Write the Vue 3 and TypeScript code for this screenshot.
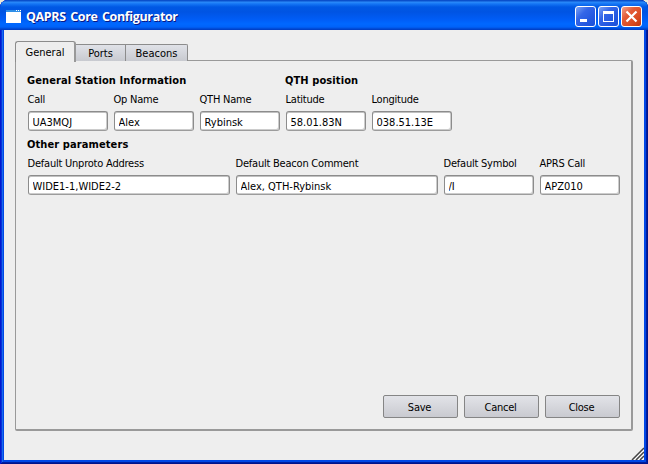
<script setup lang="ts">
import { ref } from 'vue'

interface Field { label: string; value: string; width: number }

const tabs = ['General', 'Ports', 'Beacons']
const active = ref('General')
const station = ref<Field[]>([
  { label: 'Call', value: 'UA3MQJ', width: 80 },
  { label: 'Op Name', value: 'Alex', width: 80 },
  { label: 'QTH Name', value: 'Rybinsk', width: 80 },
])
const position = ref<Field[]>([
  { label: 'Latitude', value: '58.01.83N', width: 80 },
  { label: 'Longitude', value: '038.51.13E', width: 80 },
])
const other = ref<Field[]>([
  { label: 'Default Unproto Address', value: 'WIDE1-1,WIDE2-2', width: 202 },
  { label: 'Default Beacon Comment', value: 'Alex, QTH-Rybinsk', width: 202 },
  { label: 'Default Symbol', value: '/I', width: 90 },
  { label: 'APRS Call', value: 'APZ010', width: 80 },
])
const groups = [
  [
    { title: 'General Station Information', fields: station },
    { title: 'QTH position', fields: position },
  ],
  [{ title: 'Other parameters', fields: other }],
]
const actions = ['Save', 'Cancel', 'Close']
</script>

<template>
  <div class="window">
    <header class="titlebar">
      <svg class="app-icon" width="16" height="14" viewBox="0 0 16 14">
        <rect width="15" height="13" fill="#fff" />
        <rect width="15" height="2" fill="#2f8fe8" />
        <path d="M10 .5h1M12 .5h1M14 .5h1" stroke="#fff" />
      </svg>
      <h1 class="title">QAPRS Core Configurator</h1>
      <div class="controls">
        <button class="control" aria-label="Minimize">
          <svg width="19" height="19" viewBox="0 0 19 19"><path d="M4 12h7v3H4z" fill="#fff" /></svg>
        </button>
        <button class="control" aria-label="Maximize">
          <svg width="19" height="19" viewBox="0 0 19 19"><path fill-rule="evenodd" d="M4 4h11v11H4zM5 7v7h9V7z" fill="#fff" /></svg>
        </button>
        <button class="control control-close" aria-label="Close window">
          <svg width="19" height="19" viewBox="0 0 19 19"><path d="M4.5 4.5l10 10M14.5 4.5l-10 10" stroke="#fff" stroke-width="2.2" /></svg>
        </button>
      </div>
    </header>
    <main class="client">
      <nav class="tabs">
        <button v-for="tab in tabs" :key="tab" class="tab" :class="[tab.toLowerCase(), { active: tab === active }]" @click="active = tab">{{ tab }}</button>
      </nav>
      <section class="pane">
        <div v-for="(row, i) in groups" :key="i" class="row">
          <div v-for="group in row" :key="group.title" class="group">
            <h2 class="heading">{{ group.title }}</h2>
            <div class="fields">
              <label v-for="field in group.fields.value" :key="field.label" class="field" :style="{ width: field.width + 'px' }">
                <span class="label">{{ field.label }}</span>
                <input v-model="field.value" class="input" type="text" spellcheck="false" />
              </label>
            </div>
          </div>
        </div>
        <footer class="actions">
          <button v-for="action in actions" :key="action" class="action">{{ action }}</button>
        </footer>
      </section>
      <svg class="grip" width="13" height="13" viewBox="0 0 13 13">
        <path d="M1 13L13 1M5 13L13 5M9 13L13 9" stroke="#444" stroke-width="1.5" />
        <path d="M3 13L13 3M7 13L13 7M11 13L13 11" stroke="#fff" />
      </svg>
    </main>
  </div>
</template>

<style>
body { margin: 0; background: #ece9d8; }
</style>

<style scoped>
* { box-sizing: border-box; }
button, input { font: inherit; color: inherit; margin: 0; }
.window {
  width: 648px;
  height: 464px;
  padding: 0 4px 4px;
  border-radius: 8px 8px 0 0;
  background: #0047e6;
  box-shadow: inset 1px 0 #0019cf, inset -1px 0 #00138c, inset 0 -1px #00138c, inset 2px 0 #0831d9, inset -2px 0 #001ea0, inset 0 -2px #001ea0, inset 3px 0 #166aee;
  font-family: "DejaVu Sans Condensed", "DejaVu Sans", sans-serif;
  font-stretch: condensed;
  font-size: 11px;
  letter-spacing: -0.25px;
  color: #000;
}
.titlebar {
  display: flex;
  align-items: center;
  height: 30px;
  margin: 0 -4px;
  padding: 3px 6px 0;
  border-radius: 8px 8px 0 0;
  background: linear-gradient(#0a4fcb 0, #0a4fcb 1px, #2c8cfa 2px, #1474f4 4px, #0058e4 7px, #0054e3 12px, #005cf5 19px, #0068ff 24px, #0062f8 27px, #0046cf 29px, #003bc0 30px);
}
.app-icon { flex: none; }
.title {
  flex: 1;
  margin: 0 0 0 4px;
  font-family: "Open Sans", "Noto Sans", sans-serif;
  font-stretch: normal;
  font-size: 12.5px;
  font-weight: bold;
  line-height: 18px;
  letter-spacing: -0.35px;
  word-spacing: 1.5px;
  white-space: nowrap;
  color: #fff;
  text-shadow: 1px 1px #0a1883;
}
.controls { display: flex; gap: 2px; }
.control {
  width: 21px;
  height: 21px;
  padding: 0;
  border: 1px solid #fff;
  border-radius: 3px;
  background: linear-gradient(135deg, #7ba2f4, #3466e8 35%, #2458e0 70%, #1b50d8);
}
.control svg { display: block; }
.control-close { background: linear-gradient(135deg, #f0a08c, #e35b38 35%, #da4a20 70%, #bd3611); }
.client {
  position: relative;
  height: 430px;
  padding: 11px 11px 0;
  background: #eee;
}
.tabs { display: flex; align-items: flex-end; height: 20px; padding-right: 444px; }
.tab {
  flex: none;
  height: 17px;
  padding: 0;
  border: 1px solid #8c8c8c;
  border-left: 0;
  border-bottom: 0;
  background: linear-gradient(#e0e2e8, #c8cad0);
  line-height: 17px;
}
.tab.general { width: 61px; }
.tab.ports { width: 50px; }
.tab.beacons { width: 62px; border-radius: 0 2px 0 0; }
.tab.active {
  position: relative;
  height: 21px;
  margin-bottom: -1px;
  border-left: 1px solid #8c8c8c;
  border-right: 2px solid #999;
  border-radius: 3px 3px 0 0;
  background: #eee;
  line-height: 19px;
}
.pane {
  display: flex;
  flex-direction: column;
  width: 618px;
  height: 371px;
  margin-top: -1px;
  padding: 13px 11px 11px 12px;
  border: 1px solid #999;
  border-right: 2px solid #999;
  border-bottom: 2px solid #999;
  border-radius: 2px;
}
.row { display: flex; gap: 6px; height: 64px; }
.heading {
  height: 14px;
  margin: 0 0 5px -1px;
  font-size: 11px;
  line-height: 14px;
  letter-spacing: 0.1px;
  white-space: nowrap;
}
.fields { display: flex; gap: 6px; }
.field { display: flex; flex-direction: column; }
.label { height: 14px; margin: 0 0 4px -0.5px; line-height: 14px; letter-spacing: -0.22px; white-space: nowrap; }
.input {
  width: 100%;
  height: 20px;
  padding: 2px 2px 0 3.5px;
  border: 1px solid #8c8c8c;
  border-bottom-color: #9c9c9c;
  border-radius: 3px;
  outline: 0;
  background: #fff;
  box-shadow: inset 0 1px #c0c0c0, inset -1px -1px #ccc;
  letter-spacing: 0;
}
.actions { display: flex; justify-content: flex-end; gap: 6px; margin-top: auto; }
.action {
  width: 75px;
  height: 23px;
  padding: 2px 2px 0 0;
  border: 1px solid #858585;
  border-radius: 2px;
  background: linear-gradient(#e2e3e8, #c9cad0);
  letter-spacing: inherit;
}
.grip { position: absolute; right: 0; bottom: 0; }
</style>
